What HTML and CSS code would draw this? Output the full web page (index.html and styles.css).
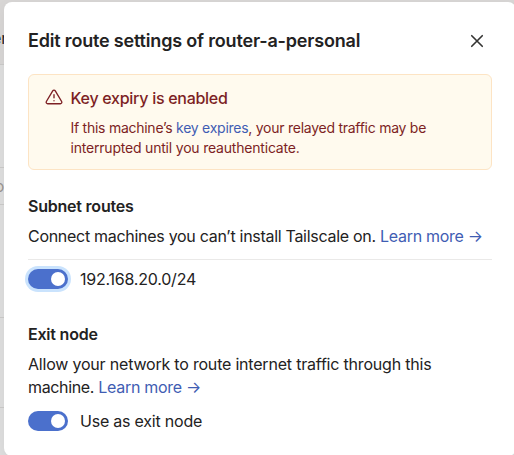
FILE: index.html
```html
<!DOCTYPE html>
<html lang="en">
<head>
<meta charset="utf-8">
<title>Edit route settings</title>
<link rel="stylesheet" href="styles.css">
</head>
<body>
<div class="backdrop" aria-hidden="true">
  <div class="strip strip-header"><span>er</span></div>
  <div class="strip strip-intro"></div>
  <div class="strip strip-search"><span>o</span></div>
  <div class="strip strip-row"></div>
  <div class="strip strip-row-two"></div>
</div>
<main class="dialog" role="dialog">
  <header class="dialog-header">
    <h1>Edit route settings of router-a-personal</h1>
    <button class="close" aria-label="Close">
      <svg width="20" height="20" viewBox="0 0 24 24" fill="none" stroke="currentColor" stroke-width="2" stroke-linecap="round"><path d="M18.3 5.7 5.7 18.3M5.7 5.7l12.6 12.6"/></svg>
    </button>
  </header>
  <section class="alert">
    <svg class="alert-icon" width="18" height="18" viewBox="0 0 24 24" fill="none" stroke="currentColor" stroke-width="1.8" stroke-linecap="round" stroke-linejoin="round"><path d="M10.29 3.86 1.82 18a2 2 0 0 0 1.71 3h16.94a2 2 0 0 0 1.71-3L13.71 3.86a2 2 0 0 0-3.42 0z"/><path d="M12 9v4M12 17h.01"/></svg>
    <div>
      <h2>Key expiry is enabled</h2>
      <p>If this machine’s <a>key expires</a>, your relayed traffic may be<br><span class="second-line">interrupted until you reauthenticate.</span></p>
    </div>
  </section>
  <section class="group subnet">
    <h3>Subnet routes</h3>
    <p>Connect machines you can’t install Tailscale on. <a>Learn more →</a></p>
    <div class="option divided"><span class="toggle focused"></span><span>192.168.20.0/24</span></div>
  </section>
  <section class="group exit">
    <h3>Exit node</h3>
    <p>Allow your network to route internet traffic through this<br><span class="last-line">machine. <a>Learn more →</a></span></p>
    <div class="option"><span class="toggle"></span><span>Use as exit node</span></div>
  </section>
</main>
</body>
</html>
```

FILE: styles.css
```css
* { box-sizing: border-box; }
html, body { height: 100%; }
body {
  margin: 0;
  overflow: hidden;
  background: #dedede;
  color: #232222;
  font: 16px/23px Inter, "Liberation Sans", sans-serif;
  letter-spacing: -.22px;
}
h1, h2, h3, p { margin: 0; }
a { color: #3f5db3; }

.backdrop { position: absolute; inset: 0; overflow: hidden; }
.strip { border-bottom: 1px solid #cbcac9; }
.strip span { display: flex; justify-content: flex-end; width: 4px; white-space: nowrap; }
.strip-header { height: 65px; padding-top: 27px; background: #d8d6d5; }
.strip-header span { width: 7px; }
.strip-intro { height: 103px; }
.strip-search { height: 37px; padding-top: 7px; color: #9c9692; }
.strip-row { height: 113px; }
.strip-row-two { height: 90px; }

.dialog {
  position: relative;
  width: 512px;
  height: 454px;
  margin: 2px 0 0 4px;
  padding: 24px;
  border-radius: 8px;
  background: #fff;
  box-shadow: 0 4px 14px rgba(0, 0, 0, .05);
}
.dialog-header { display: flex; justify-content: space-between; height: 48px; }
h1 { font-size: 18px; line-height: 30px; font-weight: 600; letter-spacing: -.18px; }
.close {
  display: flex;
  width: 30px;
  height: 30px;
  padding: 5px;
  border: 0;
  background: none;
  color: #343433;
}

.alert {
  display: flex;
  gap: 7.5px;
  height: 96px;
  padding: 12px 16px;
  border: 1px solid #fde4c4;
  border-radius: 6px;
  background: #fffaee;
  color: #7d1f24;
}
.alert-icon { flex: none; margin-top: 1px; }
h2 { font-size: 16px; line-height: 22px; font-weight: 500; letter-spacing: -.28px; }
.alert p { margin-top: 9px; font-size: 14px; line-height: 20px; letter-spacing: -.26px; }
.alert .second-line { letter-spacing: -.2px; }

.group h3 { font-size: 16px; line-height: 24px; font-weight: 600; letter-spacing: -.22px; }
.group p { margin-top: 7px; }
.group a { letter-spacing: -.28px; }
.subnet { margin-top: 24px; }
.subnet p { letter-spacing: -.29px; white-space: nowrap; }
.exit { margin-top: 27px; }
.exit p { letter-spacing: -.2px; }
.exit .last-line { letter-spacing: -.35px; }
.option { display: flex; align-items: center; gap: 12px; height: 24px; margin-top: 10px; }
.divided { height: 36px; margin-top: 11px; padding-top: 4px; border-top: 1px solid #eae9e8; }
.toggle {
  display: flex;
  justify-content: flex-end;
  width: 40px;
  height: 20px;
  padding: 3px;
  border-radius: 10px;
  background: #4b70cc;
}
.toggle::after { content: ""; width: 14px; height: 14px; border-radius: 50%; background: #fff; }
.focused { margin-bottom: 2px; box-shadow: 0 0 0 3px #cae3fd; }
```
